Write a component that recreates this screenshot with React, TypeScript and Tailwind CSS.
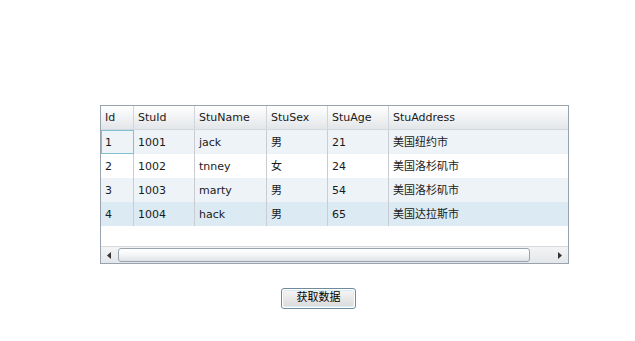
import React from "react";

const cols = [
  { key: "Id", w: 33 },
  { key: "StuId", w: 61 },
  { key: "StuName", w: 72 },
  { key: "StuSex", w: 61 },
  { key: "StuAge", w: 61 },
  { key: "StuAddress", w: 179 },
];

const rows = [
  ["1", "1001", "jack", "男", "21", "美国纽约市"],
  ["2", "1002", "tnney", "女", "24", "美国洛杉矶市"],
  ["3", "1003", "marty", "男", "54", "美国洛杉矶市"],
  ["4", "1004", "hack", "男", "65", "美国达拉斯市"],
];

const rowBg = ["bg-[#eef3f8]", "bg-white", "bg-[#eef3f8]", "bg-[#dcebf3]"];

export default function App() {
  return (
    <div
      className="w-[635px] h-[341px] bg-white flex flex-col items-start text-[12px] text-[#1a1a1a]"
      style={{ fontFamily: '"DejaVu Sans", Verdana, "Noto Sans CJK SC", sans-serif' }}
    >
      <div className="mt-[105px] ml-[100px] w-[469px] h-[159px] border border-[#98a3ae] flex flex-col bg-white">
        <div className="flex h-[24px] bg-gradient-to-b from-[#ffffff] to-[#e3e6e9] border-b border-[#d5d9dd]">
          {cols.map((c, i) => (
            <div
              key={c.key}
              style={{ width: c.w }}
              className={`h-full flex items-center pl-[4px] pt-[2px] shrink-0 text-[11px] ${i < cols.length - 1 ? "border-r border-[#d1d5d9]" : ""}`}
            >
              {c.key}
            </div>
          ))}
        </div>
        {rows.map((r, ri) => (
          <div key={ri} className={`flex h-[24px] ${rowBg[ri]}`}>
            {r.map((v, ci) => (
              <div
                key={ci}
                style={{ width: cols[ci].w }}
                className={`h-full flex items-center pl-[4px] pt-[2px] shrink-0 text-[11px] ${ci < cols.length - 1 ? "border-r border-[#c9ccd0]" : ""} ${ri === 0 && ci === 0 ? "outline outline-1 -outline-offset-1 outline-[#7fc1d2]" : ""}`}
              >
                {v}
              </div>
            ))}
          </div>
        ))}
        <div className="flex-1" />
        <div className="h-[17px] flex items-stretch bg-gradient-to-b from-[#f3f4f5] to-[#e4e7ea] border-t border-[#d8dbde]">
          <div className="w-[17px] flex items-center justify-center">
            <svg width="5" height="7" viewBox="0 0 5 7">
              <path d="M4 0 L0 3.5 L4 7 Z" fill="#333" />
            </svg>
          </div>
          <div className="w-[412px] my-[1px] rounded-[3px] border border-[#9aa4ae] bg-gradient-to-b from-[#ffffff] via-[#f3f5f7] to-[#dfe3e7]" />
          <div className="flex-1 flex items-center justify-end pr-[6px]">
            <svg width="5" height="7" viewBox="0 0 5 7">
              <path d="M1 0 L5 3.5 L1 7 Z" fill="#333" />
            </svg>
          </div>
        </div>
      </div>
      <div className="mt-[24px] ml-[281px] w-[75px] h-[21px] rounded-[3px] border border-[#6f8a9a] p-[1px] flex">
        <div className="flex-1 rounded-[2px] border border-[#d9ecf3] bg-gradient-to-b from-[#f4f4f4] to-[#dcdcdc] flex items-center justify-center text-[11px] text-black">
          获取数据
        </div>
      </div>
    </div>
  );
}
